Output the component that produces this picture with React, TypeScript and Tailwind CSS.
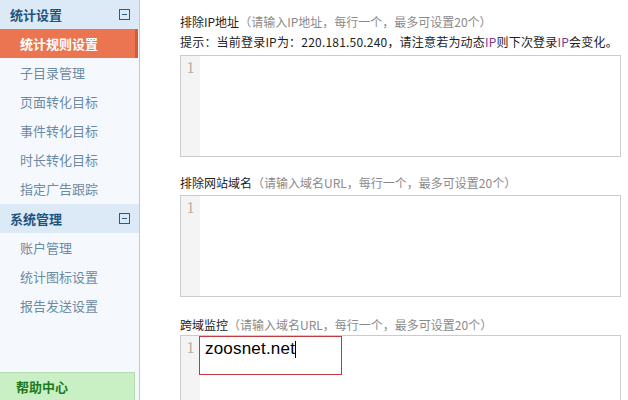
const cjk = { fontFamily: '"Noto Sans CJK SC", "Liberation Sans", sans-serif' };

function MinusBox() {
  return (
    <svg width="11" height="11" viewBox="0 0 11 11" className="text-[#2a5d86]">
      <rect x="0.5" y="0.5" width="10" height="10" fill="none" stroke="currentColor" />
      <rect x="3" y="5" width="5" height="1" fill="currentColor" />
    </svg>
  );
}

function GroupHeader({ title }: { title: string }) {
  return (
    <div className="flex h-[29px] items-center justify-between bg-[#dce9f6] pl-[10px] pr-[9px]">
      <span className="text-[13px] font-bold text-[#1e5580]">{title}</span>
      <MinusBox />
    </div>
  );
}

function NavItem({ label, active }: { label: string; active?: boolean }) {
  if (active) {
    return (
      <div className="flex h-[29px] items-center border-r-[3px] border-[#d65a39] bg-[#eb7550] pl-[20px] mr-[1px]">
        <span className="text-[13px] font-bold text-white">{label}</span>
      </div>
    );
  }
  return (
    <div className="flex h-[29px] items-center pl-[20px]">
      <span className="text-[13px] text-[#6d8aa5]">{label}</span>
    </div>
  );
}

function Editor({ height, children }: { height: number; children?: React.ReactNode }) {
  return (
    <div className="flex w-[441px] border border-[#cccccc] bg-white" style={{ height }}>
      <div className="w-[19px] bg-[#f4f4f4] pt-[1px] text-center text-[16px] leading-[22px] text-[#b9ae9f]" style={{ fontFamily: '"Liberation Serif", serif' }}>
        1
      </div>
      <div className="flex-1">{children}</div>
    </div>
  );
}

function Label({ title, note }: { title: string; note: string }) {
  return (
    <div className="text-[12px] leading-[16px]">
      <span className="text-[#222]">{title}</span>
      <span className="text-[#8a8a8a]">{note}</span>
    </div>
  );
}

export default function App() {
  return (
    <div className="flex h-[400px] w-[628px] overflow-hidden bg-white" style={cjk}>
      <aside className="flex w-[140px] shrink-0 flex-col border-r border-[#b7cbe0] bg-[#f5f9fd]">
        <GroupHeader title="统计设置" />
        <NavItem label="统计规则设置" active />
        <NavItem label="子目录管理" />
        <NavItem label="页面转化目标" />
        <NavItem label="事件转化目标" />
        <NavItem label="时长转化目标" />
        <NavItem label="指定广告跟踪" />
        <div className="h-[1px]" />
        <GroupHeader title="系统管理" />
        <NavItem label="账户管理" />
        <NavItem label="统计图标设置" />
        <NavItem label="报告发送设置" />
        <div className="flex-1" />
        <div className="mr-[4px] flex h-[28px] items-center border-t border-r border-[#b4dcae] bg-[#c9efc5] pl-[16px]">
          <span className="text-[13px] font-bold text-[#1d7a1d]">帮助中心</span>
        </div>
      </aside>

      <main className="flex-1 pl-[40px] pt-[14px]">
        <Label title="排除IP地址" note="（请输入IP地址，每行一个，最多可设置20个）" />
        <div className="mt-[4px] whitespace-nowrap text-[12px] leading-[16px] tracking-[0.2px] text-[#222]">
          提示：当前登录IP为：220.181.50.240，请注意若为动态<span className="text-[#7a3d8c]">IP</span>则下次登录<span className="text-[#7a3d8c]">IP</span>会变化。
        </div>
        <div className="mt-[5px]">
          <Editor height={102} />
        </div>

        <div className="mt-[18px]">
          <Label title="排除网站域名" note="（请输入域名URL，每行一个，最多可设置20个）" />
        </div>
        <div className="mt-[4px]">
          <Editor height={102} />
        </div>

        <div className="mt-[20px]">
          <Label title="跨域监控" note="（请输入域名URL，每行一个，最多可设置20个）" />
        </div>
        <div className="mt-[2px]">
          <Editor height={80}>
            <div className="ml-[-1px] flex h-[39px] w-[143px] items-start border border-[#c0393f] pl-[5px] pt-[1px]">
              <span className="text-[17px] leading-[22px] tracking-[0.2px] text-black" style={{ fontFamily: '"Liberation Sans", sans-serif' }}>
                zoosnet.net
              </span>
              <span className="mt-[3px] h-[17px] w-[1px] bg-black" />
            </div>
          </Editor>
        </div>
      </main>
    </div>
  );
}
